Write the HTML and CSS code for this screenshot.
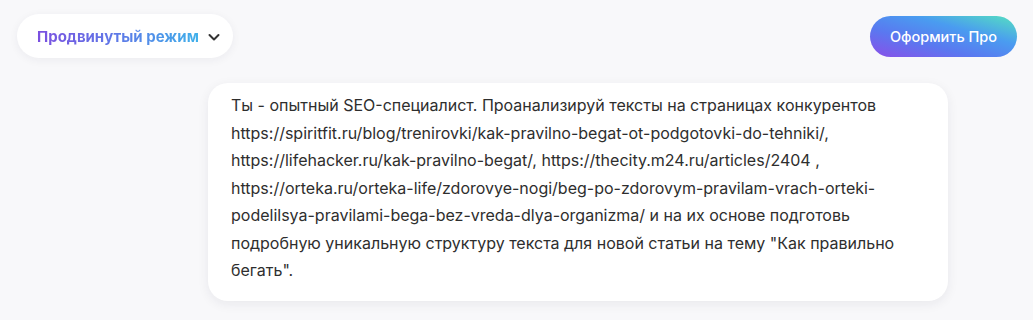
FILE: index.html
```html
<!DOCTYPE html>
<html lang="ru">
<head>
<meta charset="utf-8">
<link rel="stylesheet" href="styles.css">
</head>
<body>
<div class="page">
  <header class="topbar">
    <button class="mode">
      <span class="mode-label">Продвинутый режим</span>
      <svg class="chev" width="14" height="14" viewBox="0 0 14 14"><path d="M2.5 5 L7 9.5 L11.5 5" fill="none" stroke="#333" stroke-width="2" stroke-linecap="round" stroke-linejoin="round"/></svg>
    </button>
    <button class="pro">Оформить Про</button>
  </header>
  <div class="chat">
    <div class="msg">Ты - опытный SEO-специалист. Проанализируй тексты на страницах конкурентов https://spiritfit.ru/blog/trenirovki/kak-pravilno-begat-ot-podgotovki-do-tehniki/, https://lifehacker.ru/kak-pravilno-begat/, https://thecity.m24.ru/articles/2404 , https://orteka.ru/orteka-life/zdorovye-nogi/beg-po-zdorovym-pravilam-vrach-orteki-podelilsya-pravilami-bega-bez-vreda-dlya-organizma/ и на их основе подготовь подробную уникальную структуру текста для новой статьи на тему "Как правильно бегать".</div>
  </div>
</div>
</body>
</html>
```
FILE: styles.css
```css
html, body { margin: 0; padding: 0; }
body {
  background: #f8f8fa;
  font-family: Inter, "Noto Sans", sans-serif;
  width: 1033px;
  height: 320px;
  overflow: hidden;
}
.page { padding: 14px 16px 0 17px; }
.topbar {
  display: flex;
  justify-content: space-between;
  align-items: center;
}
.mode {
  display: flex;
  align-items: center;
  gap: 8px;
  height: 44px;
  padding: 0 12px 0 20px;
  border: none;
  border-radius: 22px;
  background: #fff;
  box-shadow: 0 2px 10px rgba(30, 30, 60, 0.06);
  font-family: inherit;
}
.mode-label {
  font-size: 15px;
  font-weight: 700;
  background: linear-gradient(90deg, #7b4fe0 0%, #5b7fe8 55%, #3fb0ea 100%);
  -webkit-background-clip: text;
  background-clip: text;
  color: transparent;
}
.chev { margin-top: 2px; }
.pro {
  height: 41px;
  width: 147px;
  border: none;
  border-radius: 21px;
  color: #fff;
  font-family: inherit;
  font-size: 14.5px;
  font-weight: 500;
  background: linear-gradient(to top right, #8a4fe8 0%, #5a78f0 35%, #4a9cf0 65%, #55e0c0 100%);
}
.chat {
  display: flex;
  justify-content: flex-end;
  padding: 25px 69px 0 0;
}
.msg {
  width: 694px;
  padding: 9px 23px 16px 23px;
  background: #fff;
  border-radius: 20px;
  box-shadow: 0 3px 12px rgba(30, 30, 60, 0.07);
  font-size: 16px;
  line-height: 27.5px;
  color: #2e2e2e;
}
```
